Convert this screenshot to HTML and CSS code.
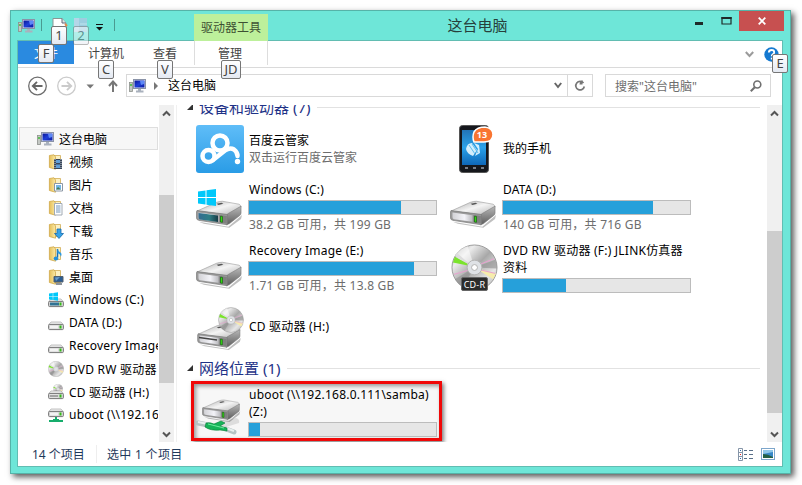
FILE: index.html
```html
<!DOCTYPE html>
<html lang="zh-CN">
<head>
    <meta charset="UTF-8">
    <title>这台电脑</title>
    <link rel="stylesheet" href="styles.css">
</head>
<body>
    <!-- shared icons -->
    <svg class="defs" width="0" height="0">
        <defs>
            <linearGradient id="gTop" x1="0" y1="0" x2="1" y2="1">
                <stop offset="0" stop-color="#a9a9a9"/><stop offset=".5" stop-color="#f4f4f4"/><stop offset="1" stop-color="#b5b5b5"/>
            </linearGradient>
            <linearGradient id="gSide" x1="0" y1="0" x2="0" y2="1">
                <stop offset="0" stop-color="#b8b8b8"/><stop offset="1" stop-color="#5d5d5d"/>
            </linearGradient>
            <linearGradient id="gFront" x1="0" y1="0" x2="1" y2="0">
                <stop offset="0" stop-color="#d2d2d6"/><stop offset=".6" stop-color="#f3f3f8"/><stop offset="1" stop-color="#b9b9bd"/>
            </linearGradient>
            <linearGradient id="gTeal" x1="0" y1="0" x2="1" y2="0">
                <stop offset="0" stop-color="#356d92"/><stop offset=".55" stop-color="#2f7f86"/><stop offset="1" stop-color="#173b45"/>
            </linearGradient>
            <linearGradient id="gDisc" x1="0" y1="0" x2="1" y2="1">
                <stop offset="0" stop-color="#9e9e9e"/><stop offset=".25" stop-color="#ececec"/><stop offset=".5" stop-color="#a8a8a8"/><stop offset=".75" stop-color="#e6e6e6"/><stop offset="1" stop-color="#a5a5a5"/>
            </linearGradient>
            <linearGradient id="gCloud" x1="0" y1="0" x2="0" y2="1">
                <stop offset="0" stop-color="#5fbdf8"/><stop offset="1" stop-color="#2a9ce6"/>
            </linearGradient>
            <linearGradient id="gPhone" x1="0" y1="0" x2="0" y2="1">
                <stop offset="0" stop-color="#2273b6"/><stop offset=".5" stop-color="#2aa2ea"/><stop offset="1" stop-color="#0e67b8"/>
            </linearGradient>
            <linearGradient id="gFolder" x1="0" y1="0" x2="1" y2="0">
                <stop offset="0" stop-color="#e5bf58"/><stop offset="1" stop-color="#fbe9a6"/>
            </linearGradient>
            <linearGradient id="gScreen" x1="0" y1="0" x2="1" y2="1">
                <stop offset="0" stop-color="#0a1596"/><stop offset=".5" stop-color="#1f3fd8"/><stop offset="1" stop-color="#0b1ba0"/>
            </linearGradient>

            <symbol id="drive" viewBox="0 0 48 28">
                <path d="M3 22L33 27L47 15L46 19L34 28L8 24z" fill="#000" opacity=".25"/>
                <path d="M1 11L21 2Q24 1 27 1L44 4Q46 5 46 7L33 15z" fill="url(#gTop)" stroke="#999" stroke-width=".6"/>
                <path d="M32 14L46 6V13Q46 15 44 16L34 24L31 25z" fill="url(#gSide)" stroke="#777" stroke-width=".6"/>
                <path d="M1 10.500L32 14.500V25L3 20.500Q.5 20 .5 18V12z" fill="#9a9a9a" stroke="#777" stroke-width=".7"/>
                <path d="M2.500 12.500L23 15.200V22L4 19.300Q2.500 19 2.500 17z" fill="url(#gFront)"/>
                <path d="M24 15L31.500 16V24L24 22.500z" fill="#808080"/>
                <path d="M25 16.200L27 16.500V22.500L25 22.200z" fill="#33df13" stroke="#145c0c" stroke-width=".7"/>
                <path d="M21 3.500L26 2.500L28 3.500L23 4.700z" fill="#555"/>
            </symbol>
            <symbol id="disc" viewBox="0 0 48 48">
                <circle cx="24" cy="24" r="23" fill="url(#gDisc)" stroke="#9b9b9b" stroke-width="1"/>
                <path d="M24 24L5 10A23 23 0 0 1 17 2z" fill="#fff" opacity=".5"/>
                <path d="M24 24L12 44A23 23 0 0 1 4 36z" fill="#888" opacity=".5"/>
                <path d="M24 24L45 16A23 23 0 0 1 47 25z" fill="#8c8c8c" opacity=".6"/>
                <path d="M22 23L2 19L4 13z" fill="#7be42c"/>
                <path d="M22 23L4 12L6 9z" fill="#ddd"/>
                <path d="M24 24L46 30L43 36z" fill="#f6ecac"/>
                <path d="M24 23L44 15M24 25L3 31M24 25L45 30" stroke="#ea9fd0" stroke-width="1"/>
                <circle cx="24" cy="24" r="7.500" fill="#dfe2e6" stroke="#b4b4b4"/>
                <circle cx="24" cy="24" r="3" fill="#fff" stroke="#b0b0b0"/>
            </symbol>
            <symbol id="pc" viewBox="0 0 17 16">
                <rect x=".5" y="4.500" width="3" height="9" fill="#c4c8c4" stroke="#8d918d" stroke-width=".8"/>
                <rect x="1.300" y="6" width="1.400" height="2" fill="#36bb2c"/>
                <rect x="4.500" y="1.500" width="12" height="9" fill="#dfe4ee" stroke="#8a93a8"/>
                <rect x="5.500" y="2.500" width="10" height="7" fill="url(#gScreen)"/>
                <path d="M11 3H15V6L12 7z" fill="#6e9cff" opacity=".8"/>
                <path d="M9 11H12V12.500H14.500V14.500H7V12.500H9z" fill="#a9b1bd"/>
            </symbol>
            <symbol id="folder" viewBox="0 0 16 16">
                <path d="M5 1.500H12.500V13.500H5z" fill="#fdf1c2" stroke="#d0ac56" stroke-width=".8"/>
                <path d="M1.400 1.500L6 .8L7.500 3V15.200L1.400 13.500z" fill="url(#gFolder)" stroke="#cfa849" stroke-width=".8"/>
            </symbol>
            <symbol id="mini-drive" viewBox="0 0 16 16">
                <path d="M3 7H13L15.200 9.500H.8z" fill="#eee" stroke="#aaa" stroke-width=".7"/>
                <rect x=".6" y="9.400" width="14.800" height="5.200" rx="1" fill="#d9d9d9" stroke="#777"/>
                <rect x="2" y="10.700" width="8" height="2.600" fill="#f3f3f3"/>
                <rect x="11.500" y="10.500" width="2" height="3" fill="#35bb18"/>
            </symbol>
            <symbol id="winlogo" viewBox="0 0 18 17">
                <path d="M0 2.500L7.500 1.500V8H0zM8.500 1.300L18 0V8H8.500zM0 9H7.500V15.500L0 14.500zM8.500 9H18V17L8.500 15.700z" fill="#00c8fa"/>
            </symbol>
        </defs>
    </svg>

    <div class="window">
        <div class="titlebar">
            <div class="quick">
                <svg class="pc-icon" width="17" height="16"><use href="#pc"/></svg>
                <span class="sep"></span>
                <svg class="doc-icon" width="16" height="17" viewBox="0 0 16 17"><path d="M1 .5H10L14 5V17H1z" fill="#fff" stroke="#8b9794"/><path d="M10 .5V5H14" fill="#dfe7e5" stroke="#667"/><path d="M13 6L15 8" stroke="#e48b48" stroke-width="2"/></svg>
                <svg class="new-icon" width="14" height="17" viewBox="0 0 14 17"><path d="M0 0H13V14H0z" fill="#a9c9e3"/><path d="M0 0H5V14H0z" fill="#c6d3ec"/><path d="M6 6H13" stroke="#d3e6f2"/></svg>
                <svg class="more-icon" width="7" height="7" viewBox="0 0 7 7"><path d="M0 0H7V1H0zM0 3H7L3.500 6.500z" fill="#111"/></svg>
                <span class="sep last"></span>
            </div>
            <div class="tool-tab">驱动器工具</div>
            <div class="title">这台电脑</div>
            <div class="buttons">
                <svg width="8" height="15" viewBox="0 0 8 15"><path d="M0 11H8V14H0z" fill="#1e2b29"/></svg>
                <svg class="max" width="11" height="15" viewBox="0 0 11 15"><path d="M1 6.500H10V13H1z" fill="none" stroke="#1e2b29" stroke-width="1.200"/><path d="M.4 6H10.600V8H.4z" fill="#1e2b29"/></svg>
                <div class="close"><svg width="8" height="8" viewBox="0 0 8 8"><path d="M.7 .7L7.300 7.300M7.300 .7L.7 7.300" stroke="#fff" stroke-width="1.800"/></svg></div>
            </div>
        </div>

        <div class="client">
            <div class="ribbon">
                <div class="tab file">文件</div>
                <div class="tab computer">计算机</div>
                <div class="tab view">查看</div>
                <div class="tab manage">管理</div>
                <div class="ribbon-right">
                    <svg width="9" height="7" viewBox="0 0 9 7"><path d="M.8 1L4.500 5L8.200 1" fill="none" stroke="#9b9b9b" stroke-width="2"/></svg>
                    <svg width="15" height="15" viewBox="0 0 15 15"><circle cx="7.500" cy="7.500" r="7.200" fill="#1579d0"/><path d="M4.800 5.500Q5 3 7.600 3Q10.200 3 10.200 5.200Q10.200 6.500 8.800 7.300Q7.700 8 7.700 9.300" fill="none" stroke="#fff" stroke-width="1.800"/><path d="M6.800 10.700H8.700V12.500H6.800z" fill="#fff"/></svg>
                </div>
            </div>

            <div class="addressbar">
                <svg class="nav-buttons" width="105" height="24" viewBox="0 0 105 24" fill="none">
                    <circle cx="14.500" cy="12" r="8.800" stroke="#6e6e6e" stroke-width="1.300"/>
                    <path d="M19.500 12H10M14 7.800L9.800 12L14 16.200" stroke="#666" stroke-width="1.900"/>
                    <circle cx="43.500" cy="12" r="8.800" stroke="#cbcbcb" stroke-width="1.300"/>
                    <path d="M38.500 12H48M44 7.800L48.200 12L44 16.200" stroke="#cbcbcb" stroke-width="1.900"/>
                    <path d="M63.500 10.500H71L67.200 14.500z" fill="#777"/>
                    <path d="M90 18V8M86 12L90 7.500L94 12" stroke="#777" stroke-width="2"/>
                </svg>
                <div class="address">
                    <svg width="17" height="16"><use href="#pc"/></svg>
                    <svg class="crumb" width="4" height="8" viewBox="0 0 4 8"><path d="M0 0L4 4L0 8z" fill="#777"/></svg>
                    <span>这台电脑</span>
                    <svg class="drop" width="8" height="7" viewBox="0 0 8 7"><path d="M.8 1L4 5L7.200 1" fill="none" stroke="#666" stroke-width="2"/></svg>
                    <div class="refresh"><svg width="12" height="12" viewBox="0 0 12 12"><path d="M9.500 3A4.300 4.300 0 1 0 10.300 6.500" fill="none" stroke="#777" stroke-width="1.700"/><path d="M6 1.500L8.500 0V4.500H5.500z" fill="#777"/></svg></div>
                </div>
                <div class="search">
                    <span>搜索"这台电脑"</span>
                    <svg width="12" height="12" viewBox="0 0 12 12"><circle cx="7.300" cy="4.500" r="3.500" fill="none" stroke="#707070" stroke-width="1.600"/><path d="M4.800 7.200L.8 11.200" stroke="#707070" stroke-width="2"/></svg>
                </div>
            </div>

            <div class="panes">
                <div class="tree">
                    <div class="node root"><svg width="17" height="16"><use href="#pc"/></svg>这台电脑</div>
                    <div class="node"><svg width="16" height="16"><use href="#folder"/><path d="M6 5H14V15H6z" fill="#38465a"/><path d="M8 6H12V9H8zM8 10.500H12V14H8z" fill="#5f9ed8"/><path d="M7 5V15M13 5V15" stroke="#c8d0da" stroke-dasharray="1 1"/></svg>视频</div>
                    <div class="node"><svg width="16" height="16"><use href="#folder"/><path d="M6.500 6.500H14.500V14H6.500z" fill="#fff" stroke="#8b97a5"/><path d="M8 8H13V12.500H8z" fill="#72b7e6"/><path d="M8 12.500L10 10L13 12.500z" fill="#457c56"/></svg>图片</div>
                    <div class="node"><svg width="16" height="16"><use href="#folder"/><path d="M6.500 3.500H14V15H6.500z" fill="#fff" stroke="#a1aab5"/><path d="M8 6H12.500M8 8H12.500M8 10H12.500M8 12H12.500" stroke="#7096bd"/></svg>文档</div>
                    <div class="node"><svg width="16" height="16"><use href="#folder"/><path d="M9 6H13V10.500H15.500L11 15.500L6.500 10.500H9z" fill="#36a3e8" stroke="#1769ab" stroke-width=".8"/></svg>下载</div>
                    <div class="node"><svg width="16" height="16"><use href="#folder"/><path d="M9.500 3V11.500" stroke="#1b6fb3" stroke-width="1.500"/><path d="M9.500 2.500Q10 5 12.500 6.500Q14.500 8 12.500 11Q13 8 9.500 7z" fill="#2b9be4"/><ellipse cx="8" cy="12.500" rx="2.300" ry="2" fill="#2291db"/></svg>音乐</div>
                    <div class="node"><svg width="16" height="16"><use href="#folder"/><path d="M6 7.500H15V13H6z" fill="#2b5d93" stroke="#52606e"/><path d="M7 8.500L12 8L8 12z" fill="#6b9dcb"/><path d="M8 15H14" stroke="#69717a" stroke-width="1.500"/></svg>桌面</div>
                    <div class="node latin"><svg width="16" height="16"><use href="#mini-drive"/><rect x="2" y="10.500" width="9" height="3" fill="#307394"/><use href="#winlogo" x="1" y="0" width="9" height="9"/></svg>Windows (C:)</div>
                    <div class="node latin"><svg width="16" height="16"><use href="#mini-drive"/></svg>DATA (D:)</div>
                    <div class="node latin"><svg width="16" height="16"><use href="#mini-drive"/></svg>Recovery Image (E:)</div>
                    <div class="node latin"><svg width="16" height="16"><use href="#disc"/></svg>DVD RW 驱动器 (F:)</div>
                    <div class="node latin"><svg width="16" height="16"><use href="#disc" x="5" y="0" width="10" height="10"/><use href="#mini-drive"/><path d="M2 12H10" stroke="#555"/></svg>CD 驱动器 (H:)</div>
                    <div class="node latin"><svg width="16" height="16"><use href="#mini-drive" y="-5" width="16" height="16"/><path d="M7 10H9V12H11V13H15V15H1V13H5V12H7z" fill="#16ad6c"/></svg>uboot (\\192.168.0.111)</div>
                </div>
                <div class="scroll tree-scroll">
                    <svg width="9" height="7" viewBox="0 0 9 7"><path d="M1 5.500L4.500 2L8 5.500" fill="none" stroke="#555" stroke-width="2"/></svg>
                    <div class="thumb"></div>
                    <svg width="9" height="7" viewBox="0 0 9 7"><path d="M1 1.500L4.500 5L8 1.500" fill="none" stroke="#555" stroke-width="2"/></svg>
                </div>

                <div class="files">
                    <div class="group first"><svg width="6" height="6"><path d="M6 0V6H0z" fill="#333"/></svg><span>设备和驱动器 (7)</span></div>
                    <div class="items">
                        <div class="item">
                            <svg width="48" height="48" viewBox="0 0 48 48">
                                <rect width="48" height="48" rx="3" fill="url(#gCloud)"/>
                                <g fill="none" stroke="#fff" stroke-width="4.500">
                                    <circle cx="12.500" cy="31" r="6"/>
                                    <circle cx="24" cy="18" r="7.500"/>
                                    <path d="M17 35L29 25.500Q34 22 38 24.500Q41.500 27 41.500 31" stroke-linecap="round"/>
                                </g>
                                <circle cx="41.500" cy="36.500" r="2.700" fill="#fff"/>
                            </svg>
                            <div class="info"><div class="name">百度云管家</div><div class="sub">双击运行百度云管家</div></div>
                        </div>
                        <div class="item">
                            <svg width="48" height="48" viewBox="0 0 48 48">
                                <rect x="9.500" y=".5" width="29" height="47" rx="3" fill="#15171c" stroke="#555"/>
                                <rect x="12" y="5" width="24" height="35" fill="url(#gPhone)"/>
                                <path d="M16 24Q17 18 22 18L27 25L23 31Q17 29 16 24zM24 18L29 20L30 28L25 31L28 24z" fill="#e8f7ff" opacity=".9"/>
                                <path d="M19 20L25 29M22 19L28 28" stroke="#5cbdee"/>
                                <path d="M15 43H18M23 43H26M31 43H34" stroke="#9ba1aa" stroke-width="1.500"/>
                                <path d="M24 17Q22 12 24 7Q27 2 35 2Q43 3 43 9.500Q43 17 34 17z" fill="#f97531" stroke="#fff" stroke-width="1.500"/>
                                <text x="32" y="13" class="badge">13</text>
                            </svg>
                            <div class="info"><div class="name">我的手机</div></div>
                        </div>
                        <div class="item latin">
                            <svg width="48" height="48">
                                <use href="#drive" x="0" y="17" width="47" height="28"/>
                                <path d="M2.500 30L22 32.500V39L4 36.500Q2.500 36 2.500 34z" fill="url(#gTeal)"/>
                                <use href="#winlogo" x="2" y="6" width="18" height="17"/>
                            </svg>
                            <div class="info"><div class="name">Windows (C:)</div><div class="bar"><div class="fill" style="width: 81.500%"></div></div><div class="sub">38.2 GB 可用，共 199 GB</div></div>
                        </div>
                        <div class="item latin">
                            <svg width="48" height="48"><use href="#drive" x="0" y="17" width="47" height="28"/></svg>
                            <div class="info"><div class="name">DATA (D:)</div><div class="bar"><div class="fill" style="width: 80.200%"></div></div><div class="sub">140 GB 可用，共 716 GB</div></div>
                        </div>
                        <div class="item latin">
                            <svg width="48" height="48"><use href="#drive" x="0" y="17" width="47" height="28"/></svg>
                            <div class="info"><div class="name">Recovery Image (E:)</div><div class="bar"><div class="fill" style="width: 88.500%"></div></div><div class="sub">1.71 GB 可用，共 13.8 GB</div></div>
                        </div>
                        <div class="item latin">
                            <svg width="48" height="48">
                                <use href="#disc" x="1" y="0" width="47" height="47"/>
                                <rect x="11.500" y="33.500" width="26" height="13" rx="1.500" fill="#2c2c2c" stroke="#666"/>
                                <text x="24.500" y="43.500" class="cdr">CD-R</text>
                            </svg>
                            <div class="info"><div class="name">DVD RW 驱动器 (F:) JLINK仿真器资料</div><div class="bar"><div class="fill" style="width: 33.700%"></div></div></div>
                        </div>
                        <div class="item latin">
                            <svg width="48" height="48">
                                <use href="#drive" x="0" y="21" width="47" height="26"/>
                                <path d="M3 34.500L21 37" stroke="#444" stroke-width="1.500"/>
                                <use href="#disc" x="22" y="4" width="26" height="26"/>
                            </svg>
                            <div class="info"><div class="name">CD 驱动器 (H:)</div></div>
                        </div>
                    </div>
                    <div class="group"><svg width="6" height="6"><path d="M6 0V6H0z" fill="#333"/></svg><span>网络位置 (1)</span></div>
                    <div class="item selected latin">
                        <svg width="48" height="48">
                            <path d="M17 37L40 31Q44 32 43 36L30 40z" fill="#ddd"/>
                            <use href="#drive" x="6" y="12" width="39" height="23"/>
                            <path d="M2 36L12 38M30 42L38 45" stroke="#b5c3c3" stroke-width="5" stroke-linecap="round"/>
                            <path d="M2 35L12 37M30 41L38 44" stroke="#e8efef" stroke-width="2"/>
                            <path d="M10 36Q14 35 18 37L25 34L29 36L24 39L31 41V44L24 43Q15 44 9 40z" fill="#14b458" stroke="#087b38" stroke-width=".6"/>
                            <path d="M12 37L28 41" stroke="#6eea9e"/>
                        </svg>
                        <div class="info"><div class="name">uboot (\\192.168.0.111\samba) (Z:)</div><div class="bar"><div class="fill" style="width: 6%"></div></div></div>
                    </div>
                </div>
                <div class="scroll files-scroll">
                    <svg width="9" height="7" viewBox="0 0 9 7"><path d="M1 5.500L4.500 2L8 5.500" fill="none" stroke="#555" stroke-width="2"/></svg>
                    <div class="thumb"></div>
                    <svg width="9" height="7" viewBox="0 0 9 7"><path d="M1 1.500L4.500 5L8 1.500" fill="none" stroke="#555" stroke-width="2"/></svg>
                </div>
            </div>

            <div class="statusbar">
                <span class="count">14 个项目</span>
                <span class="picked">选中 1 个项目</span>
                <svg class="details" width="15" height="13" viewBox="0 0 15 13"><path d="M.5 .5H4.500V12.500H.5zM.5 4.500H4.500M.5 8.500H4.500" fill="#fff" stroke="#8595a8"/><path d="M6 2.500H9M11 2.500H15M6 6.500H9M11 6.500H15M6 10.500H9M11 10.500H15" stroke="#596f88"/><path d="M2 2H3V3H2zM2 10H3V11H2z" fill="#2d66aa"/><path d="M2 6H3V7H2z" fill="#e22"/></svg>
                <svg width="14" height="12" viewBox="0 0 14 12"><rect x=".5" y=".5" width="13" height="11" fill="#fff" stroke="#7da6cb"/><path d="M2 2H12V10H2z" fill="#3787c7"/><path d="M2 2H12V4L2 6z" fill="#8ec7e8"/><path d="M2 6Q7 6 12 9V10H2z" fill="#236044"/></svg>
            </div>
        </div>

        <!-- keyboard hints -->
        <div class="key key-f">F</div>
        <div class="key key-1">1</div>
        <div class="key key-2">2</div>
        <div class="key key-c">C</div>
        <div class="key key-v">V</div>
        <div class="key key-jd">JD</div>
        <div class="key key-e">E</div>
    </div>
</body>
</html>
```
FILE: styles.css
```css
* {
    box-sizing: border-box;
}

body {
    margin: 0;
    padding: 10px;
    width: 802px;
    height: 485px;
    overflow: hidden;
    background: #fff;
    font-family: "Noto Sans", "Noto Sans CJK SC", sans-serif;
    font-size: 12px;
    color: #000;
}

svg {
    display: block;
    flex-shrink: 0;
}

.defs {
    position: absolute;
}

.window {
    position: relative;
    width: 781px;
    height: 464px;
    padding: 0 7px;
    background: #6ee6d8;
    border: 1px solid #55b3a8;
    box-shadow: 3px 3px 6px rgba(0, 0, 0, 0.65);
}

/* title bar */
.titlebar {
    display: flex;
    height: 29px;
}

.quick {
    display: flex;
    width: 176px;
    padding-top: 7px;
}

.sep {
    width: 1px;
    height: 12px;
    margin: 1px 0 0 6px;
    background: #4a9a91;
}

.doc-icon {
    margin-left: 10px;
}

.new-icon {
    margin-left: 6px;
    opacity: 0.8;
}

.more-icon {
    margin: 6px 0 0 8px;
}

.sep.last {
    margin-left: 11px;
}

.tool-tab {
    width: 74px;
    height: 27px;
    margin-top: 3px;
    background: #bdf09b;
    color: #3d5033;
    line-height: 27px;
    text-align: center;
}

.title {
    width: 419px;
    color: #263f3b;
    font-size: 15px;
    line-height: 29px;
    text-align: center;
}

.buttons {
    display: flex;
    margin: 0 -1px 0 auto;
}

.buttons .max {
    margin: 0 7px 0 18px;
}

.close {
    display: flex;
    align-items: center;
    justify-content: center;
    width: 45px;
    height: 20px;
    background: #c75050;
}

.client {
    display: flex;
    flex-direction: column;
    width: 766px;
    height: 427px;
    margin-left: -1px;
    border: 1px solid #62bdb2;
    background: #fff;
}

/* ribbon tabs */
.ribbon {
    display: flex;
    height: 27px;
    border-bottom: 1px solid #dadada;
    color: #444;
}

.tab {
    height: 23px;
    line-height: 26px;
    text-align: center;
}

.tab.file {
    width: 56px;
    background: #2a8ae0;
    color: #fff;
}

.tab.computer {
    width: 64px;
}

.tab.view {
    width: 54px;
    margin-right: 2px;
}

.tab.manage {
    width: 74px;
    height: 24px;
    padding-right: 2px;
    border: solid #ddd;
    border-width: 0 1px;
}

.ribbon-right {
    display: flex;
    align-items: center;
    gap: 10px;
    margin-left: auto;
    padding-right: 3px;
}

/* address row */
.addressbar {
    display: flex;
    height: 37px;
    padding: 6px 0 0 5px;
}

.nav-buttons {
    margin-right: -2px;
}

.address {
    display: flex;
    align-items: center;
    width: 467px;
    height: 23px;
    padding-left: 2px;
    border: 1px solid #d9d9d9;
}

.address span {
    padding-bottom: 2px;
}

.crumb {
    margin: 0 10px 0 8px;
}

.drop {
    margin-left: auto;
}

.refresh {
    display: flex;
    align-items: center;
    justify-content: center;
    width: 25px;
    height: 21px;
    margin-left: 5px;
    border-left: 1px solid #d9d9d9;
}

.search {
    display: flex;
    align-items: center;
    justify-content: space-between;
    width: 166px;
    height: 23px;
    margin-left: 12px;
    padding: 0 8px 0 9px;
    border: 1px solid #d9d9d9;
    color: #6d6d6d;
}

/* main area */
.panes {
    display: flex;
    height: 337px;
}

.tree {
    width: 141px;
    padding: 22px 1px 0 1px;
    overflow: hidden;
}

.node {
    display: flex;
    align-items: center;
    gap: 5px;
    height: 23px;
    padding-left: 29px;
    white-space: nowrap;
    overflow: hidden;
}

.node.root {
    padding-left: 17px;
    border: 1px solid #dedede;
    background: #f7f7f7;
}

.latin {
    letter-spacing: 0.22px;
}

.scroll {
    display: flex;
    flex-direction: column;
    align-items: center;
    justify-content: space-between;
    width: 15px;
    padding: 5px 0 4px;
    background: #f0f0f0;
}

.thumb {
    width: 15px;
    background: #cdcdcd;
}

.tree-scroll .thumb {
    height: 188px;
    margin-top: 30px;
}

.files-scroll .thumb {
    height: 182px;
    margin-top: 96px;
}

.files {
    flex: 1;
    margin-left: 2px;
    padding-left: 10px;
    border-left: 1px solid #f0f0f0;
    overflow: hidden;
}

.group {
    display: flex;
    align-items: center;
    height: 18px;
    padding-bottom: 2px;
    color: #1e3287;
    font-size: 15px;
    line-height: 16px;
    white-space: nowrap;
}

.group.first {
    margin-top: -6px;
}

.group span {
    margin: 0 7px 0 6px;
}

.group::after {
    content: "";
    flex: 1;
    height: 1px;
    margin-right: 7px;
    background: #e2e2e2;
}

.items {
    display: grid;
    grid-template-columns: 254px 254px;
    grid-template-rows: 57px 60px 61px 57px;
    padding: 3px 0 5px 9px;
}

.item {
    display: flex;
    align-items: center;
}

.info {
    width: 189px;
    margin-left: 4px;
    line-height: 17px;
}

.name {
    padding-left: 1px;
}

.sub {
    padding-left: 1px;
    color: #6d6d6d;
}

.bar {
    height: 15px;
    margin: 2px 0 1px;
    border: 1px solid #bcbcbc;
    background: #e6e6e6;
}

.fill {
    height: 13px;
    background: #26a0da;
}

.badge {
    fill: #fff;
    font: bold 9px "Noto Sans", sans-serif;
    text-anchor: middle;
}

.cdr {
    fill: #fff;
    font: 9px "Noto Sans", sans-serif;
    text-anchor: middle;
}

.selected {
    width: 251px;
    height: 60px;
    margin: 3px 0 0 4px;
    padding-left: 2px;
    border: 3px solid #f00808;
    background: #f7f7f7;
    box-shadow: 2px 2px 4px rgba(0, 0, 0, 0.5), inset 2px 2px 4px rgba(0, 0, 0, 0.4);
}

.selected .bar {
    margin-bottom: 0;
}

.statusbar {
    display: flex;
    align-items: center;
    height: 24px;
    padding: 0 7px 0 14px;
    color: #1e395b;
}

.count {
    width: 65px;
    border-right: 1px solid #eee;
}

.picked {
    padding-left: 10px;
    letter-spacing: 0.3px;
}

.details {
    margin: 0 8px 0 auto;
}

/* key tips sit on top of the ribbon */
.key {
    position: absolute;
    width: 16px;
    height: 19px;
    border: 1px solid #767676;
    border-radius: 2px;
    background: linear-gradient(#fff, #e4e9f2);
    color: #444;
    font-size: 13px;
    line-height: 17px;
    text-align: center;
}

.key-f { left: 27px; top: 33px; }
.key-1 { left: 40px; top: 15px; }
.key-2 { left: 62px; top: 15px; opacity: 0.5; }
.key-c { left: 87px; top: 49px; }
.key-v { left: 146px; top: 49px; }
.key-jd { left: 210px; top: 49px; width: 20px; }
.key-e { left: 761px; top: 43px; }
```
